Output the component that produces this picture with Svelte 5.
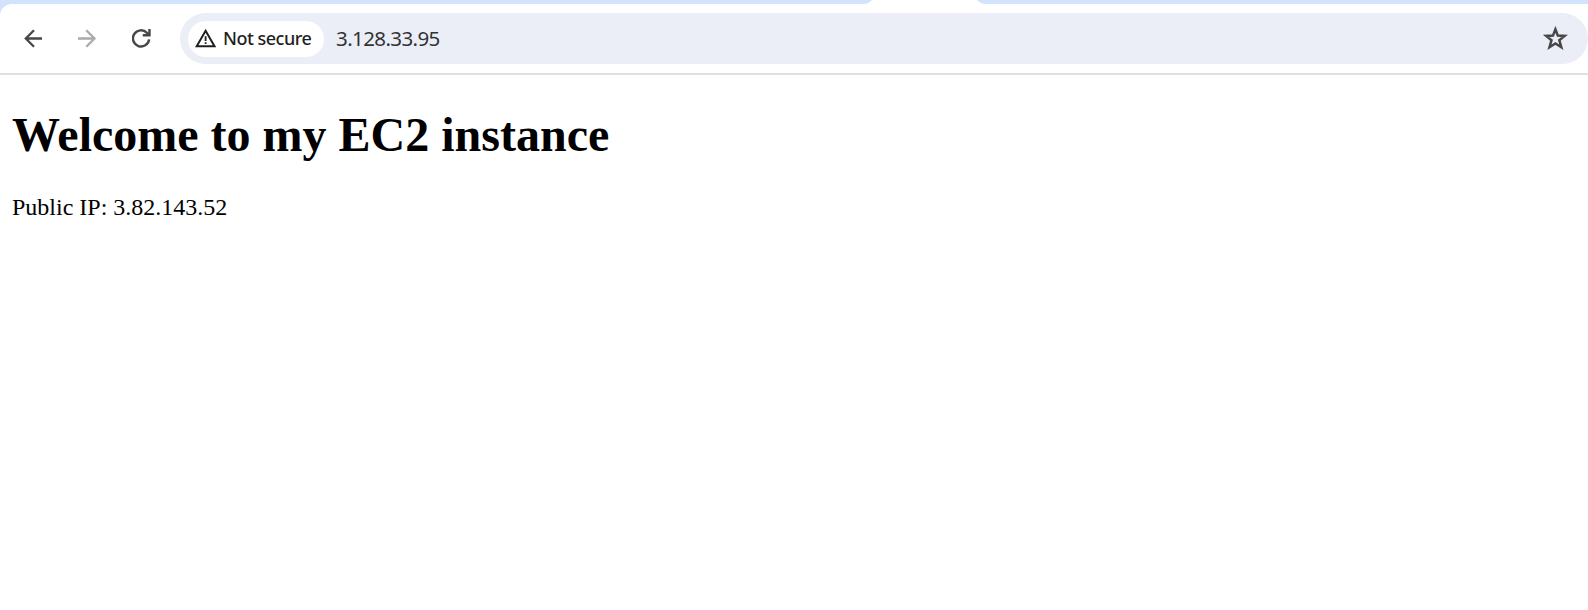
<script>
  const address = '3.128.33.95';
  const publicIp = '3.82.143.52';
</script>

<div class="browser">
  <div class="tabs"><span class="left"></span><svg class="active" width="131" height="4" viewBox="0 0 131 4"><path d="M0 0H13C11 2 9 3.5 6 4H0ZM118 0H131V4H125C122 3.5 120 2 118 0Z" fill="#d3e3fd" /></svg><span class="right"></span></div>
  <div class="frame">
    <header>
      <nav>
        <svg width="20" height="20" viewBox="0 0 20 20" fill="none" stroke="#474747" stroke-width="2.3"><path d="M18 10.5H1.6M10 2.3 1.8 10.5l8.2 8.2" /></svg>
        <svg width="20" height="20" viewBox="0 0 20 20" fill="none" stroke="#ababab" stroke-width="2.3"><path d="M0 10.5H16.5M8.3 2.3l8.2 8.2-8.2 8.2" /></svg>
        <svg width="20" height="20" viewBox="0 0 20 20" fill="none" stroke="#474747" stroke-width="2.4"><path d="M17.1 11.4A8.1 8.1 0 1 1 14.9 4.8L17.2 7M17.5 1V7.3H10.8" /></svg>
      </nav>
      <div class="omnibox">
        <span class="chip">
          <svg width="22" height="20" viewBox="0 0 22 20"><path d="M10.6 1.8 19.5 17.2H1.7Z" fill="none" stroke="#1f1f1f" stroke-width="2" /><path d="M9.7 7.3h1.8v4.6H9.7ZM9.7 13.2h1.8v1.9H9.7Z" fill="#1f1f1f" /></svg>
          <b>Not secure</b>
        </span>
        <span class="url">{address}</span>
        <svg class="star" width="26" height="26" viewBox="0 0 26 26"><path d="M13.4 3.3 15.8 9.6 22.6 9.9 17.3 14.2 19.3 21.2 13.4 17.4 7.5 21.2 9.5 14.2 4.2 9.9 11 9.6Z" fill="none" stroke="#474747" stroke-width="2.5" /></svg>
      </div>
    </header>
    <main>
      <h1>Welcome to my EC2 instance</h1>
      <p>Public IP: {publicIp}</p>
    </main>
  </div>
</div>

<style>
  .browser { width: 1588px; height: 610px; overflow: hidden; background: #d3e3fd; }
  .tabs { display: flex; height: 4px; }
  .left { width: 859px; }
  .active { display: block; background: #fff; }
  .right { flex: 1; }
  .frame { height: 606px; background: #fff; border-top-left-radius: 12px; }
  header { box-sizing: border-box; display: flex; height: 71px; padding: 9px 0 11px 24px; border-bottom: 2px solid #e0e0e0; }
  nav { display: flex; width: 156px; height: 20px; gap: 34px; padding-top: 15px; }
  svg { display: block; flex: none; }
  .omnibox { box-sizing: border-box; display: flex; align-items: center; width: 1408px; height: 51px; padding: 0 20px 0 8px; border-radius: 26px; background: #ebeef7; }
  .chip { box-sizing: border-box; display: flex; align-items: center; width: 136px; height: 36px; padding-left: 7px; gap: 6px; border-radius: 18px; background: #fff; }
  .chip b { font: 500 18px/34px "Noto Sans", sans-serif; color: #1f1f1f; white-space: nowrap; letter-spacing: -0.5px; padding-bottom: 1px; }
  .url { margin-left: 12px; padding-bottom: 2px; font: 400 20.5px/34px "Noto Sans", sans-serif; color: #333; letter-spacing: -0.6px; }
  .star { margin-left: auto; }
  main { padding: 33px 12px; font-family: "Liberation Serif", serif; color: #000; }
  h1 { margin: 0; font-size: 48px; line-height: 54px; white-space: nowrap; }
  p { margin: 31px 0 0; font-size: 24px; line-height: 28px; }
</style>
